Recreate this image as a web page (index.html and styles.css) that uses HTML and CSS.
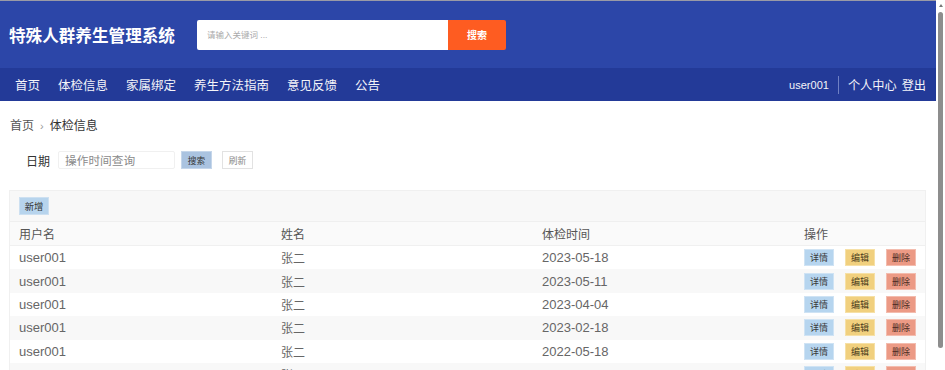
FILE: index.html
```html
<!DOCTYPE html>
<html lang="zh-CN">
<head>
<meta charset="utf-8">
<title>特殊人群养生管理系统</title>
<link rel="stylesheet" href="styles.css">
</head>
<body>
<div class="page">
  <header class="header">
    <div class="topbar">
      <div class="brand">特殊人群养生管理系统</div>
      <form class="search">
        <input class="search-input" type="text" placeholder="请输入关键词 ...">
        <button class="search-btn" type="button">搜索</button>
      </form>
    </div>
    <nav class="nav">
      <ul class="nav-list">
        <li>首页</li>
        <li>体检信息</li>
        <li>家属绑定</li>
        <li>养生方法指南</li>
        <li>意见反馈</li>
        <li>公告</li>
      </ul>
      <div class="nav-user">
        <span class="username">user001</span>
        <span class="divider"></span>
        <span class="nav-link">个人中心</span>
        <span class="nav-link">登出</span>
      </div>
    </nav>
  </header>

  <main class="main">
    <div class="crumbs"><span class="crumb-home">首页</span><span class="crumb-sep">›</span><span class="crumb-cur">体检信息</span></div>

    <div class="filter">
      <label class="filter-label">日期</label>
      <input class="filter-input" type="text" placeholder="操作时间查询">
      <button class="btn btn-query" type="button">搜索</button>
      <button class="btn btn-reset" type="button">刷新</button>
    </div>

    <section class="panel">
      <div class="toolbar">
        <button class="btn btn-add" type="button">新增</button>
      </div>
      <table class="grid">
        <colgroup><col class="c1"><col class="c2"><col class="c3"><col></colgroup>
        <thead>
          <tr><th>用户名</th><th>姓名</th><th>体检时间</th><th>操作</th></tr>
        </thead>
        <tbody>
          <tr><td class="latin">user001</td><td>张二</td><td class="latin">2023-05-18</td><td class="ops"><button class="btn op op-view">详情</button><button class="btn op op-edit">编辑</button><button class="btn op op-del">删除</button></td></tr>
          <tr><td class="latin">user001</td><td>张二</td><td class="latin">2023-05-11</td><td class="ops"><button class="btn op op-view">详情</button><button class="btn op op-edit">编辑</button><button class="btn op op-del">删除</button></td></tr>
          <tr><td class="latin">user001</td><td>张二</td><td class="latin">2023-04-04</td><td class="ops"><button class="btn op op-view">详情</button><button class="btn op op-edit">编辑</button><button class="btn op op-del">删除</button></td></tr>
          <tr><td class="latin">user001</td><td>张二</td><td class="latin">2023-02-18</td><td class="ops"><button class="btn op op-view">详情</button><button class="btn op op-edit">编辑</button><button class="btn op op-del">删除</button></td></tr>
          <tr><td class="latin">user001</td><td>张二</td><td class="latin">2022-05-18</td><td class="ops"><button class="btn op op-view">详情</button><button class="btn op op-edit">编辑</button><button class="btn op op-del">删除</button></td></tr>
          <tr><td class="latin">user001</td><td>张二</td><td class="latin">2022-03-10</td><td class="ops"><button class="btn op op-view">详情</button><button class="btn op op-edit">编辑</button><button class="btn op op-del">删除</button></td></tr>
        </tbody>
      </table>
    </section>
  </main>
</div>
<div class="scrollbar"><span class="scroll-arrow"></span><span class="scroll-thumb"></span></div>
</body>
</html>
```

FILE: styles.css
```css
html, body {
  margin: 0;
  padding: 0;
  overflow: hidden;
  background: #fff;
}
body {
  font-family: "Liberation Sans", "Noto Sans CJK SC", sans-serif;
  color: #333;
}
.page {
  width: 936px;
}
.header {
  border-top: 1px solid #9a9aa6;
}
.topbar {
  height: 67px;
  background: #2c46a8;
  display: flex;
  align-items: center;
  padding-left: 9px;
}
.brand {
  color: #fff;
  font-size: 16.6px;
  font-weight: bold;
  margin-top: 1px;
}
.search {
  display: flex;
  margin: 0 0 0 22px;
  height: 30px;
}
.search-input {
  width: 251px;
  height: 30px;
  box-sizing: border-box;
  border: none;
  border-radius: 2px 0 0 2px;
  padding: 0 10px;
  font-family: inherit;
  font-size: 8.5px;
  outline: none;
}
.search-input::placeholder { color: #aaa; }
.search-btn {
  width: 58px;
  height: 30px;
  border: none;
  border-radius: 0 2px 2px 0;
  background: #fe5c21;
  color: #fff;
  font-family: inherit;
  font-size: 10px;
  font-weight: bold;
  padding: 0;
}
.nav {
  height: 33px;
  background: #233a98;
  display: flex;
  align-items: center;
  justify-content: space-between;
  padding: 0 10px 0 15px;
}
.nav-list {
  display: flex;
  gap: 18px;
  list-style: none;
  margin: 0;
  padding: 0;
  color: #f4f4f8;
  font-size: 12.5px;
}
.nav-user {
  display: flex;
  align-items: center;
  color: #f4f4f8;
}
.username {
  font-size: 11px;
}
.divider {
  width: 1px;
  height: 18px;
  background: #6f80c4;
  margin: 0 9px 0 9px;
}
.nav-link {
  font-size: 12.2px;
  margin-right: 5px;
}
.nav-link:last-child { margin-right: 0; }

.main {
  padding: 17px 10px 0 9px;
}
.crumbs {
  font-size: 12px;
  line-height: 16px;
  padding-left: 1px;
  display: flex;
  align-items: center;
}
.crumb-home { color: #555; }
.crumb-sep { color: #999; margin: 0 6px 0 6px; font-size: 11px; }
.crumb-cur { color: #333; }

.filter {
  display: flex;
  align-items: center;
  margin-top: 17px;
  padding-left: 17px;
  height: 18px;
}
.filter-label {
  font-size: 12px;
  color: #333;
  margin-right: 8px;
}
.filter-input {
  width: 117px;
  height: 18px;
  box-sizing: border-box;
  border: 1px solid #f0f0f0;
  border-radius: 2px;
  padding: 0 6px;
  font-family: inherit;
  font-size: 11.7px;
  outline: none;
  margin-right: 6px;
}
.filter-input::placeholder { color: #8a8a8a; }
.btn {
  font-family: inherit;
  border: none;
  padding: 0;
  font-size: 8.7px;
  color: #333;
  box-sizing: border-box;
}
.btn-query {
  width: 31px;
  height: 18px;
  background: #aac3e0;
  border: 1px solid #c5d6ea;
  margin-right: 10px;
}
.btn-reset {
  width: 31px;
  height: 18px;
  background: #fff;
  border: 1px solid #e2e2e2;
  color: #888;
}

.panel {
  margin-top: 21px;
  width: 917px;
  background: #f8f8f8;
  border: 1px solid #f0f0f0;
  box-sizing: border-box;
}
.toolbar {
  height: 31px;
  padding: 6px 0 0 9px;
  box-sizing: border-box;
  border-bottom: 1px solid #efefef;
  display: flex;
  align-items: flex-start;
}
.btn-add {
  width: 30px;
  height: 18px;
  background: #b7d4ed;
  border: 1px solid #cde0f1;
  font-size: 9.3px;
}
.grid {
  width: 100%;
  border-collapse: collapse;
  table-layout: fixed;
}
.c1 { width: 262px; }
.c2 { width: 261px; }
.c3 { width: 262px; }
.grid th, .grid td {
  text-align: left;
  font-weight: normal;
  padding: 0 0 0 9px;
  height: 23.4px;
  font-size: 12px;
  color: #666;
  white-space: nowrap;
}
.grid th {
  color: #555;
  height: 23px;
  background: #fafafa;
}
.grid tbody tr:nth-child(odd) td { background: #fff; }
.grid tbody tr:nth-child(even) td { background: #f8f8f8; }
.grid thead tr { border-bottom: 1px solid #f0f0f0; }
.grid td.latin { font-size: 13px; }
.ops {
  font-size: 0;
}
.op {
  width: 30px;
  height: 17px;
  margin-right: 11px;
  font-size: 9px;
  vertical-align: middle;
  color: #3a3a3a;
}
.op-view { background: #b6d5ef; border: 1px solid #cfe3f4; }
.op-edit { background: #f1d07e; border: 1px solid #f6e0a6; color: #4a3d1c; }
.op-del  { background: #ec9a85; border: 1px solid #f3bcae; color: #4a2a22; margin-right: 0; }

.scrollbar {
  position: fixed;
  top: 0;
  right: 0;
  width: 9px;
  height: 370px;
  background: #fff;
}
.scroll-arrow {
  position: absolute;
  top: 4px;
  left: 3px;
  width: 0;
  height: 0;
  border-left: 2.5px solid transparent;
  border-right: 2.5px solid transparent;
  border-bottom: 3px solid #777;
}
.scroll-thumb {
  position: absolute;
  top: 12px;
  left: 2px;
  width: 5px;
  height: 336px;
  border-radius: 3px;
  background: #8d8d8d;
}
```
